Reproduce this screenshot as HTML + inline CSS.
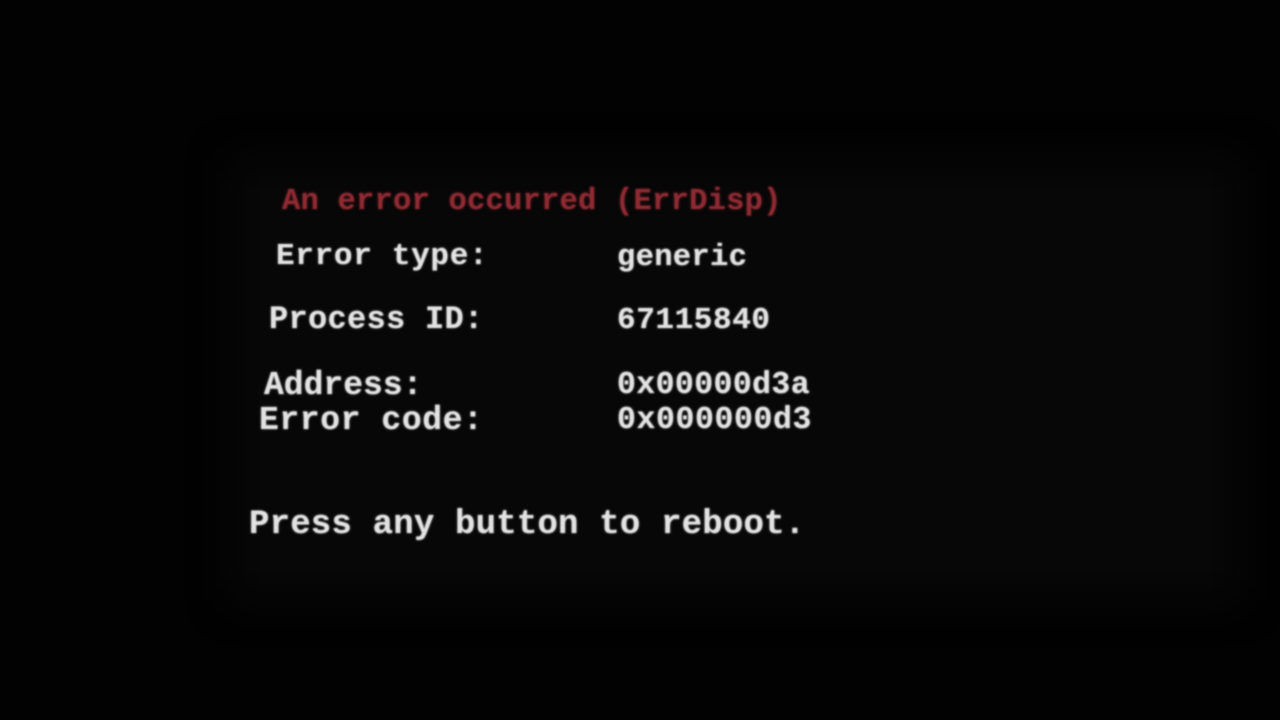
<!DOCTYPE html>
<html><head><style>
html,body{margin:0;padding:0;width:1280px;height:720px;background:#020202;overflow:hidden}
.scr{position:absolute;left:230px;top:160px;width:1010px;height:440px;background:#070707;filter:blur(20px)}
.t{position:absolute;font-family:"Liberation Mono",monospace;font-weight:bold;color:#e2e2e2;white-space:pre;line-height:1;text-shadow:0 0 2px rgba(255,255,255,.5);filter:blur(.7px)}
.r{color:#8e2a32;text-shadow:0 0 3px rgba(160,40,50,.5)}
</style></head><body>
<div class="scr"></div>
<div class="t r" style="left:282px;top:187px;font-size:30.5px;letter-spacing:0.2px">An error occurred (ErrDisp)</div>
<div class="t" style="left:276px;top:241px;font-size:31px;letter-spacing:0.7px">Error type:</div>
<div class="t" style="left:617px;top:243px;font-size:30.5px;letter-spacing:0.3px">generic</div>
<div class="t" style="left:269px;top:304px;font-size:32px;letter-spacing:0.3px">Process ID:</div>
<div class="t" style="left:617px;top:305px;font-size:31px;letter-spacing:0.6px">67115840</div>
<div class="t" style="left:264px;top:369px;font-size:33px">Address:</div>
<div class="t" style="left:617px;top:370px;font-size:31.5px;letter-spacing:0.4px">0x00000d3a</div>
<div class="t" style="left:259px;top:404px;font-size:33px;letter-spacing:0.6px">Error code:</div>
<div class="t" style="left:617px;top:405px;font-size:31.5px;letter-spacing:0.6px">0x000000d3</div>
<div class="t" style="left:249px;top:508px;font-size:34px;letter-spacing:0.2px">Press any button to reboot.</div>
</body></html>
